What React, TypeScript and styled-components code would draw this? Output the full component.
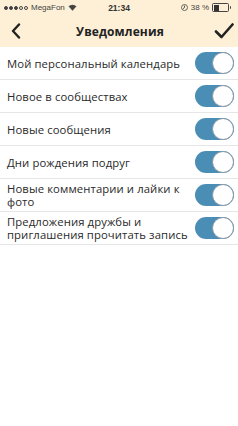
import styled, { createGlobalStyle } from "styled-components";

const GlobalStyle = createGlobalStyle`
  html, body {
    margin: 0;
    padding: 0;
    background: #ffffff;
  }
  body {
    font-family: "Open Sans", "Noto Sans", sans-serif;
    color: #222;
  }
`;

const Screen = styled.div`
  width: 238px;
  min-height: 426px;
  background: #fff;
`;

const Top = styled.div`
  background: #fdf0d6;
`;

const StatusBar = styled.div`
  height: 15px;
  display: grid;
  grid-template-columns: 1fr auto 1fr;
  align-items: center;
  padding: 0 4px;
  font-family: "Liberation Sans", sans-serif;
  font-size: 8px;
  color: #444;
`;

const StatusLeft = styled.div`
  display: flex;
  align-items: center;
  gap: 3px;
`;

const StatusTime = styled.div`
  font-weight: bold;
  font-size: 8.5px;
  color: #333;
`;

const StatusRight = styled.div`
  display: flex;
  justify-content: flex-end;
  align-items: center;
  gap: 3px;
`;

const Dots = styled.span`
  display: flex;
  gap: 1px;
`;

const Dot = styled.span<{ filled: boolean }>`
  width: 4px;
  height: 4px;
  border-radius: 50%;
  box-sizing: border-box;
  border: 0.8px solid #444;
  background: ${p => (p.filled ? "#444" : "transparent")};
`;

const Battery = styled.span`
  display: flex;
  align-items: center;
  width: 14px;
  height: 6px;
  border: 1px solid #444;
  border-radius: 1.5px;
  padding: 0.5px;
  box-sizing: content-box;
  position: relative;
  &::after {
    content: "";
    position: absolute;
    right: -3px;
    top: 1.5px;
    width: 1.5px;
    height: 3px;
    background: #444;
    border-radius: 0 1px 1px 0;
  }
`;

const BatteryFill = styled.span`
  height: 100%;
  background: #333;
`;

const Header = styled.div`
  height: 32px;
  display: flex;
  align-items: center;
  justify-content: space-between;
  padding: 0 3px 0 5px;
`;

const Title = styled.div`
  font-size: 12px;
  font-weight: 700;
  color: #222;
  letter-spacing: 0.1px;
`;

const IconButton = styled.div`
  width: 22px;
  height: 22px;
  display: flex;
  align-items: center;
  justify-content: center;
`;

const List = styled.div`
  display: flex;
  flex-direction: column;
`;

const Row = styled.div`
  display: flex;
  align-items: center;
  justify-content: space-between;
  min-height: 33px;
  padding: 2px 4px 2px 7px;
  box-sizing: border-box;
  border-bottom: 1px solid #e6e6e6;
  gap: 6px;
`;

const Label = styled.div`
  font-size: 11.3px;
  line-height: 13px;
  color: #2a2a2a;
  letter-spacing: 0.1px;
`;

const Toggle = styled.div<{ on: boolean }>`
  flex: 0 0 auto;
  width: 39px;
  height: 22px;
  border-radius: 11px;
  background: ${p => (p.on ? "#4a8db5" : "#e5e5e5")};
  position: relative;
`;

const Knob = styled.div<{ on: boolean }>`
  position: absolute;
  top: 0;
  ${p => (p.on ? "right: 0;" : "left: 0;")}
  width: 22px;
  height: 22px;
  border-radius: 50%;
  background: #fff;
  box-sizing: border-box;
  border: 1px solid #8a9aa6;
`;

const items = [
  "Мой персональный календарь",
  "Новое в сообществах",
  "Новые сообщения",
  "Дни рождения подруг",
  "Новые комментарии и лайки к фото",
  "Предложения дружбы и приглашения прочитать запись",
];

export default function App() {
  return (
    <Screen>
      <GlobalStyle />
      <Top>
        <StatusBar>
          <StatusLeft>
            <Dots>
              {[1, 1, 1, 0, 0].map((f, i) => (
                <Dot key={i} filled={!!f} />
              ))}
            </Dots>
            <span>MegaFon</span>
            <svg width="9" height="7" viewBox="0 0 9 7">
              <path d="M0.5 2.3 A6 6 0 0 1 8.5 2.3 L4.5 6.8 Z" fill="#444" />
            </svg>
          </StatusLeft>
          <StatusTime>21:34</StatusTime>
          <StatusRight>
            <svg width="7" height="7" viewBox="0 0 7 7">
              <circle cx="3.5" cy="3.5" r="3" fill="none" stroke="#444" strokeWidth="0.8" />
              <path d="M3.5 1.6 L3.5 3.6 L2 4.6" stroke="#444" strokeWidth="0.9" fill="none" />
            </svg>
            <span>38 %</span>
            <Battery>
              <BatteryFill style={{ width: "38%" }} />
            </Battery>
            <span style={{ width: 2 }} />
          </StatusRight>
        </StatusBar>
        <Header>
          <IconButton>
            <svg width="10" height="16" viewBox="0 0 10 16">
              <path d="M8 1.5 L2 8 L8 14.5" stroke="#222" strokeWidth="2.4" fill="none" strokeLinecap="round" strokeLinejoin="round" />
            </svg>
          </IconButton>
          <Title>Уведомления</Title>
          <IconButton>
            <svg width="20" height="16" viewBox="0 0 20 16">
              <path d="M2 8.5 L7.5 14 L18.5 1.5" stroke="#222" strokeWidth="2.6" fill="none" strokeLinecap="round" strokeLinejoin="round" />
            </svg>
          </IconButton>
        </Header>
      </Top>
      <List>
        {items.map(t => (
          <Row key={t}>
            <Label>{t}</Label>
            <Toggle on>
              <Knob on />
            </Toggle>
          </Row>
        ))}
      </List>
    </Screen>
  );
}
